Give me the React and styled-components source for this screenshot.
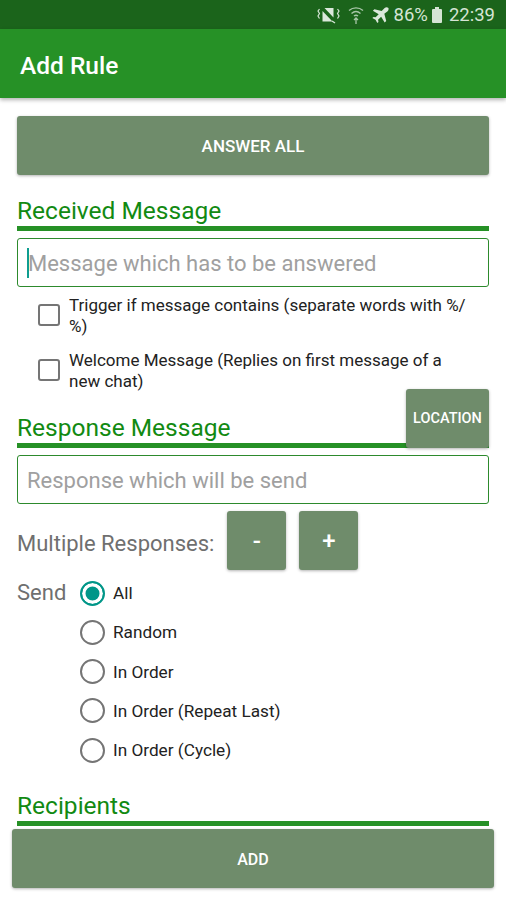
import styled, { createGlobalStyle } from "styled-components";

const GlobalStyle = createGlobalStyle`
  html, body {
    margin: 0;
    padding: 0;
    background: #fff;
    font-family: Roboto, "Liberation Sans", sans-serif;
  }
  * {
    box-sizing: border-box;
  }
`;

const sendOptions = ["All", "Random", "In Order", "In Order (Repeat Last)", "In Order (Cycle)"];

export default function App() {
  return (
    <Screen>
      <GlobalStyle />
      <StatusBar>
        <MuteIcon width="23" height="18" viewBox="0 0 23 18" fill="none" stroke="#d5e4d5">
          <path d="M2.500 3l-1.500 2 1.500 2.500-1.500 2.500 1.500 2.500" strokeWidth="1.200" />
          <path d="M20.500 3l1.500 2-1.500 2.500 1.500 2.500-1.500 2.500" strokeWidth="1.200" />
          <path d="M7.500 2h9v9.500z" fill="#dbe8db" stroke="none" />
          <path d="M5.500 5l10 10.500h-10z" fill="#dbe8db" stroke="none" />
          <path d="M15 15l3 2" strokeWidth="1.400" />
        </MuteIcon>
        <WifiIcon width="16" height="20" viewBox="0 0 16 20" fill="none" stroke="#a9c6a9">
          <path d="M1 5.500c4-3.500 10-3.500 14 0" strokeWidth="1.400" />
          <path d="M3.500 8.500c2.700-2.300 6.300-2.300 9 0" strokeWidth="1.400" />
          <path d="M6 11c1.200-1 2.800-1 4 0" strokeWidth="1.400" />
          <path d="M8 19v-6M6 15l2-2 2 2" strokeWidth="1.300" />
        </WifiIcon>
        <svg width="17" height="17" viewBox="0 0 16 16">
          <path
            d="M15.200.800c-.9-.9-2.400-.7-3.300.2L9.100 3.800 2.300 2 .8 3.500l5.500 3.300-2.900 2.900-2-.4L.3 10.400l3 1.700 1.700 3 1.100-1.100-.4-2 2.900-2.900 3.300 5.500 1.500-1.500-1.800-6.800L14.700 4c.9-.9 1.300-2.300.5-3.200z"
            fill="#dbe8db"
          />
        </svg>
        <StatusText>86%</StatusText>
        <Battery />
        <StatusText $time>22:39</StatusText>
      </StatusBar>
      <AppBar>Add Rule</AppBar>
      <Content>
        <RaisedButton>ANSWER ALL</RaisedButton>
        <SectionTitle>Received Message</SectionTitle>
        <Rule />
        <Field>
          <Caret />
          <Placeholder>Message which has to be answered</Placeholder>
        </Field>
        <CheckRow>
          <CheckBox />
          <CheckLabel>Trigger if message contains (separate words with %/ %)</CheckLabel>
        </CheckRow>
        <CheckRow>
          <CheckBox />
          <CheckLabel>Welcome Message (Replies on first message of a new chat)</CheckLabel>
        </CheckRow>
        <ResponseHead>
          <SectionTitle>Response Message</SectionTitle>
          <Rule />
          <LocationButton>LOCATION</LocationButton>
        </ResponseHead>
        <Field>
          <Placeholder>Response which will be send</Placeholder>
        </Field>
        <MultipleRow>
          <MutedLabel>Multiple Responses:</MutedLabel>
          <SquareButton>-</SquareButton>
          <SquareButton>+</SquareButton>
        </MultipleRow>
        <SendRow>
          <SendLabel>Send</SendLabel>
          <RadioList>
            {sendOptions.map((option, i) => (
              <RadioRow key={option}>
                <Radio $checked={i === 0} />
                <RadioLabel>{option}</RadioLabel>
              </RadioRow>
            ))}
          </RadioList>
        </SendRow>
        <RecipientsTitle>Recipients</RecipientsTitle>
        <Rule />
      </Content>
      <AddButton>ADD</AddButton>
    </Screen>
  );
}

const Screen = styled.div`
  position: relative;
  width: 506px;
  height: 900px;
  overflow: hidden;
  background: #fff;
`;

const StatusBar = styled.div`
  height: 29px;
  background: #1b641b;
  display: flex;
  align-items: center;
  justify-content: flex-end;
  padding: 1px 11px 0 0;
  color: #d5e4d5;
`;

const MuteIcon = styled.svg`
  margin-right: 8px;
`;

const WifiIcon = styled.svg`
  margin-right: 8px;
`;

const StatusText = styled.span`
  font-size: 18.500px;
  margin-left: ${(p) => (p.$time ? "7px" : "5px")};
`;

const Battery = styled.span`
  position: relative;
  width: 10px;
  height: 14px;
  margin: 2px 0 0 4px;
  background: #d5e4d5;
  border-radius: 1px;
  &::before {
    content: "";
    position: absolute;
    left: 3px;
    top: -2px;
    width: 4px;
    height: 2px;
    background: #d5e4d5;
  }
`;

const AppBar = styled.div`
  position: relative;
  height: 69px;
  background: #269126;
  color: #fff;
  display: flex;
  align-items: center;
  padding: 3px 0 0 20px;
  font-size: 24.500px;
  font-weight: 500;
  box-shadow: 0 2px 4px rgba(0, 0, 0, 0.3);
`;

const Content = styled.div`
  padding: 18px 17px 0;
`;

const RaisedButton = styled.div`
  display: flex;
  align-items: center;
  justify-content: center;
  height: 59px;
  background: #6f8c6b;
  color: #fff;
  font-size: 17px;
  font-weight: 500;
  border-radius: 3px;
  box-shadow: 0 1px 3px rgba(0, 0, 0, 0.3);
`;

const SectionTitle = styled.div`
  color: #128a12;
  font-size: 24.500px;
  line-height: 30px;
  margin-top: 21px;
`;

const RecipientsTitle = styled(SectionTitle)`
  margin-top: 21px;
`;

const Rule = styled.div`
  height: 5px;
  background: #269126;
`;

const Field = styled.div`
  display: flex;
  align-items: center;
  height: 49px;
  margin-top: 7px;
  padding: 2px 0 0 9px;
  border: 1.500px solid #2d8a2d;
  border-radius: 3px;
`;

const Caret = styled.span`
  width: 2px;
  height: 30px;
  margin: -2px -1px 0 0;
  background: #0f9d8f;
`;

const Placeholder = styled.span`
  color: #a0a0a0;
  font-size: 22px;
`;

const CheckRow = styled.div`
  display: flex;
  align-items: center;
  height: 55px;
  padding-left: 21px;
`;

const CheckBox = styled.span`
  flex: none;
  width: 22px;
  height: 22px;
  margin-right: 9px;
  border: 2.500px solid #757575;
  border-radius: 3px;
`;

const CheckLabel = styled.span`
  color: #222;
  font-size: 17px;
  line-height: 21px;
  width: 404px;
  padding-top: 3px;
`;

const ResponseHead = styled.div`
  position: relative;
  margin-top: -5px;
`;

const LocationButton = styled.div`
  position: absolute;
  right: 0;
  top: -24px;
  width: 83px;
  height: 59px;
  display: flex;
  align-items: center;
  justify-content: center;
  background: #6f8c6b;
  color: #fff;
  font-size: 14.500px;
  font-weight: 500;
  border-radius: 3px;
  box-shadow: 0 1px 3px rgba(0, 0, 0, 0.3);
`;

const MultipleRow = styled.div`
  display: flex;
  align-items: center;
  gap: 13px;
  margin-top: 7px;
`;

const MutedLabel = styled.span`
  color: #6f6f6f;
  font-size: 22px;
  margin-top: 5px;
`;

const SquareButton = styled.div`
  width: 59px;
  height: 59px;
  display: flex;
  align-items: center;
  justify-content: center;
  background: #6f8c6b;
  color: #fff;
  font-size: 24px;
  font-weight: 500;
  border-radius: 3px;
  box-shadow: 0 1px 3px rgba(0, 0, 0, 0.3);
`;

const SendRow = styled.div`
  display: flex;
  margin-top: 3.500px;
`;

const SendLabel = styled.span`
  width: 63px;
  color: #6f6f6f;
  font-size: 22px;
  line-height: 38px;
`;

const RadioList = styled.div`
  display: flex;
  flex-direction: column;
`;

const RadioRow = styled.div`
  display: flex;
  align-items: center;
  height: 39.250px;
`;

const Radio = styled.span`
  width: 25px;
  height: 25px;
  margin-right: 8px;
  border-radius: 50%;
  border: 2.500px solid ${(p) => (p.$checked ? "#009688" : "#757575")};
  background: ${(p) => (p.$checked ? "#009688" : "transparent")};
  box-shadow: ${(p) => (p.$checked ? "inset 0 0 0 3.500px #fff" : "none")};
`;

const RadioLabel = styled.span`
  color: #222;
  font-size: 17.200px;
`;

const AddButton = styled(RaisedButton)`
  position: absolute;
  left: 12px;
  right: 12px;
  top: 829px;
  padding-top: 1px;
  font-size: 16px;
`;
